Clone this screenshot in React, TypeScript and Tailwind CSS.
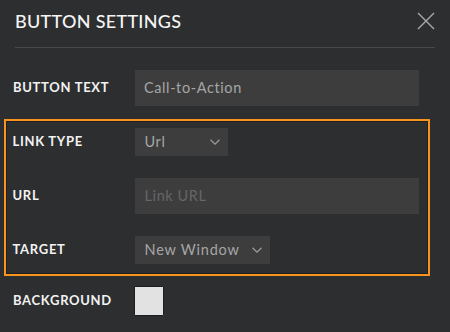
const font = { fontFamily: 'Lato, "Noto Sans", sans-serif' };

const Chevron = () => (
  <svg width="12" height="8" viewBox="0 0 12 8" fill="none" stroke="#9a9a9a" strokeWidth="1.3">
    <path d="M1.5 1.8 6 6.2l4.5-4.4" />
  </svg>
);

const Row = ({ label, children, className = '' }: { label: string; children: React.ReactNode; className?: string }) => (
  <div className={`flex items-center ${className}`}>
    <div className="w-[122px] text-[13px] font-bold tracking-[0.7px] text-[#f2f2f2]">{label}</div>
    {children}
  </div>
);

export default function App() {
  return (
    <div className="w-[450px] h-[332px] bg-[#2d2e30] overflow-hidden" style={font}>
      <div className="mx-[15px] h-[48px] border-b border-[#48494b] flex items-start justify-between pt-[8px]">
        <div className="text-[18px] font-medium tracking-[0.3px] text-[#f5f5f5]">BUTTON SETTINGS</div>
        <svg width="20" height="20" viewBox="0 0 20 20" stroke="#a9a9a9" strokeWidth="1.4" className="mt-[3px] -mr-[1px]">
          <path d="M2 2l16 16M18 2 2 18" />
        </svg>
      </div>

      <Row label="BUTTON TEXT" className="pl-[13px] mt-[22px]">
        <div className="w-[284px] h-[36px] bg-[#3d3d3e] flex items-center pl-[9px] text-[14.5px] tracking-[0.6px] text-[#a6a6a6]">
          Call-to-Action
        </div>
      </Row>

      <div className="ml-[4px] mt-[13px] w-[426px] h-[157px] border-[2.5px] border-[#f7931e] shadow-[inset_0_0_0_1px_#1f2022] pl-[6.5px] pt-[6.5px]">
        <Row label="LINK TYPE">
          <div className="w-[93px] h-[28px] bg-[#3d3d3e] flex items-center justify-between pl-[10px] pr-[7px] text-[14.5px] tracking-[0.6px] text-[#a6a6a6]">
            Url
            <Chevron />
          </div>
        </Row>
        <Row label="URL" className="mt-[22px]">
          <div className="w-[284px] h-[36px] bg-[#3d3d3e] flex items-center pl-[10px] text-[14.5px] tracking-[0.6px] text-[#666667]">
            Link URL
          </div>
        </Row>
        <Row label="TARGET" className="mt-[22px]">
          <div className="w-[135px] h-[28px] bg-[#3d3d3e] flex items-center justify-between pl-[10px] pr-[7px] text-[14.5px] tracking-[0.8px] text-[#a6a6a6]">
            New Window
            <Chevron />
          </div>
        </Row>
      </div>

      <Row label="BACKGROUND" className="pl-[13px] mt-[10px]">
        <div className="-ml-[1px] w-[30px] h-[30px] bg-[#e2e2e2] border border-[#1e1e1e] rounded-[1px]" />
      </Row>
    </div>
  );
}
